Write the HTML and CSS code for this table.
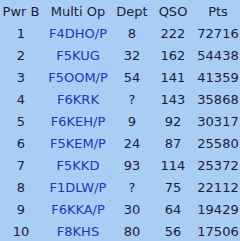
FILE: index.html
```html
<!DOCTYPE html>
<html>
<head>
<meta charset="utf-8">
<link rel="stylesheet" href="styles.css">
</head>
<body>
<table class="results">
<thead>
<tr><th class="c1">Pwr B</th><th class="c2">Multi Op</th><th class="c3">Dept</th><th class="c4">QSO</th><th class="c5">Pts</th></tr>
</thead>
<tbody>
<tr><td>1</td><td class="call">F4DHO/P</td><td>8</td><td>222</td><td>72716</td></tr>
<tr><td>2</td><td class="call">F5KUG</td><td>32</td><td>162</td><td>54438</td></tr>
<tr><td>3</td><td class="call">F5OOM/P</td><td>54</td><td>141</td><td>41359</td></tr>
<tr><td>4</td><td class="call">F6KRK</td><td>?</td><td>143</td><td>35868</td></tr>
<tr><td>5</td><td class="call">F6KEH/P</td><td>9</td><td>92</td><td>30317</td></tr>
<tr><td>6</td><td class="call">F5KEM/P</td><td>24</td><td>87</td><td>25580</td></tr>
<tr><td>7</td><td class="call">F5KKD</td><td>93</td><td>114</td><td>25372</td></tr>
<tr><td>8</td><td class="call">F1DLW/P</td><td>?</td><td>75</td><td>22112</td></tr>
<tr><td>9</td><td class="call">F6KKA/P</td><td>30</td><td>64</td><td>19429</td></tr>
<tr><td>10</td><td class="call">F8KHS</td><td>80</td><td>56</td><td>17506</td></tr>
</tbody>
</table>
</body>
</html>
```
FILE: styles.css
```css
html, body {
  margin: 0;
  padding: 0;
  background: #a9cdf4;
}
.results {
  width: 240px;
  border-collapse: collapse;
  table-layout: fixed;
  font-family: "DejaVu Sans", Verdana, sans-serif;
  font-size: 13px;
  color: #1c1c3c;
}
.results th, .results td {
  height: 22px;
  padding: 0;
  text-align: center;
  font-weight: normal;
  white-space: nowrap;
}
.results th { height: 22px; }
.c1 { width: 42px; }
.c2 { width: 72px; }
.c3 { width: 36px; }
.c4 { width: 46px; }
.c5 { width: 44px; }
.call { color: #2236b8; }
```
